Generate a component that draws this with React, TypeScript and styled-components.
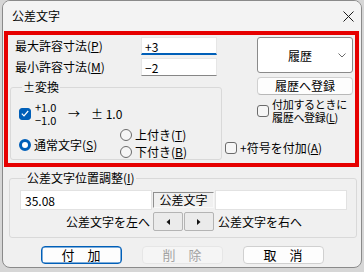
import React from "react";
import styled, { createGlobalStyle } from "styled-components";

const GlobalStyle = createGlobalStyle`
  html, body {
    margin: 0;
    padding: 0;
  }
  body {
    width: 364px;
    height: 272px;
    overflow: hidden;
    background: #d6d6d6;
    font-family: "Noto Sans CJK JP", "Noto Sans", sans-serif;
    font-size: 12px;
    color: #000;
  }
  * {
    box-sizing: border-box;
  }
`;

export default function App() {
  return (
    <>
      <GlobalStyle />
      <Window>
        <TitleBar>
          <Title>公差文字</Title>
          <CloseButton>
            <svg width="11" height="11" viewBox="0 0 11 11">
              <path d="M0.5 0.5 L10.5 10.5 M10.5 0.5 L0.5 10.5" stroke="#1b1b1b" strokeWidth="1" />
            </svg>
          </CloseButton>
        </TitleBar>

        <RedFrame>
          <LeftColumn>
            <FieldRow>
              <FieldLabel>最大許容寸法(<U>P</U>)</FieldLabel>
              <TextBox $focused>+3</TextBox>
            </FieldRow>
            <FieldRow $gap={3}>
              <FieldLabel>最小許容寸法(<U>M</U>)</FieldLabel>
              <TextBox>−2</TextBox>
            </FieldRow>

            <ConvertGroup>
              <Legend>±変換</Legend>
              <ConvertRow>
                <CheckBox $checked>
                  <svg width="8" height="7" viewBox="0 0 8 7">
                    <path d="M0.8 3.6 L3 5.8 L7.2 1" stroke="#fff" strokeWidth="1.2" fill="none" />
                  </svg>
                </CheckBox>
                <Fraction>
                  <span>+1.0</span>
                  <span>−1.0</span>
                </Fraction>
                <Arrow>→</Arrow>
                <span>± 1.0</span>
              </ConvertRow>
              <RadioArea>
                <RadioItem $offset={3}>
                  <Radio $checked />
                  <span>通常文字(<U>S</U>)</span>
                </RadioItem>
                <RadioStack>
                  <RadioItem>
                    <Radio />
                    <span>上付き(<U>T</U>)</span>
                  </RadioItem>
                  <RadioItem>
                    <Radio />
                    <span>下付き(<U>B</U>)</span>
                  </RadioItem>
                </RadioStack>
              </RadioArea>
            </ConvertGroup>
          </LeftColumn>

          <RightColumn>
            <ComboBox>
              <ComboText>履歴</ComboText>
              <svg width="8" height="5" viewBox="0 0 8 5">
                <path d="M0.5 0.5 L4 4 L7.5 0.5" stroke="#6b6b6b" strokeWidth="1" fill="none" />
              </svg>
            </ComboBox>
            <SmallButton>履歴へ登録</SmallButton>
            <CheckRow $indent={39} $top={3}>
              <CheckBox />
              <TwoLine>
                <span>付加するときに</span>
                <span>履歴へ登録(<U>L</U>)</span>
              </TwoLine>
            </CheckRow>
            <CheckRow $indent={7} $top={17}>
              <CheckBox />
              <span>+符号を付加(<U>A</U>)</span>
            </CheckRow>
          </RightColumn>
        </RedFrame>

        <PositionGroup>
          <Legend $left={6}>公差文字位置調整(<U>I</U>)</Legend>
          <PositionGrid>
            <PlainBox>35.08</PlainBox>
            <SunkenLabel>公差文字</SunkenLabel>
            <PlainBox />
            <SideText $align="right">公差文字を左へ</SideText>
            <ArrowPair>
              <ArrowButton>
                <svg width="4" height="6" viewBox="0 0 4 6">
                  <path d="M4 0 L0.5 3 L4 6 Z" fill="#111" />
                </svg>
              </ArrowButton>
              <ArrowButton>
                <svg width="4" height="6" viewBox="0 0 4 6">
                  <path d="M0 0 L3.5 3 L0 6 Z" fill="#111" />
                </svg>
              </ArrowButton>
            </ArrowPair>
            <SideText $align="left">公差文字を右へ</SideText>
          </PositionGrid>
        </PositionGroup>

        <ButtonBar>
          <DialogButton $variant="default">付　加</DialogButton>
          <DialogButton $variant="disabled">削　除</DialogButton>
          <DialogButton>取　消</DialogButton>
        </ButtonBar>
      </Window>
    </>
  );
}

const Window = styled.div`
  display: flex;
  flex-direction: column;
  margin-left: 2px;
  width: 360px;
  height: 268px;
  background: #f0f0f0;
  border: 1px solid #8a8a8a;
  border-radius: 8px;
  overflow: hidden;
`;

const TitleBar = styled.div`
  display: flex;
  align-items: center;
  justify-content: space-between;
  height: 30px;
  padding: 0 6px 0 9px;
  background: #f3f3f3;
`;

const Title = styled.span`
  font-size: 12px;
  line-height: 14px;
`;

const CloseButton = styled.span`
  display: flex;
  width: 11px;
  height: 11px;
  margin-right: 1px;
`;

const U = styled.span`
  text-decoration: underline;
  text-underline-offset: 1px;
`;

const RedFrame = styled.div`
  display: grid;
  grid-template-columns: 210px 1fr;
  height: 136px;
  margin: 0 2px 0 1px;
  border: 4px solid #e60000;
`;

const LeftColumn = styled.div`
  display: flex;
  flex-direction: column;
`;

const FieldRow = styled.div<{ $gap?: number }>`
  display: flex;
  align-items: center;
  height: 18px;
  margin-top: ${(p) => p.$gap ?? 2}px;
`;

const FieldLabel = styled.span`
  width: 133px;
  padding-left: 7px;
  line-height: 14px;
`;

const TextBox = styled.div<{ $focused?: boolean }>`
  width: 76px;
  height: 18px;
  padding: 1px 3px 0;
  line-height: 15px;
  background: #fff;
  border: 1px solid #e6e6e6;
  border-bottom: ${(p) => (p.$focused ? "2px solid #005fb8" : "1px solid #868686")};
`;

const ConvertGroup = styled.fieldset`
  margin: 4px 0 0 2px;
  padding: 0 0 0 8px;
  width: 208px;
  height: 80px;
  border: 1px solid #d9d9d9;
  border-radius: 3px;
`;

const Legend = styled.legend<{ $left?: number }>`
  margin-left: ${(p) => p.$left ?? 3}px;
  padding: 0 1px;
  line-height: 14px;
  font-size: 12px;
`;

const ConvertRow = styled.div`
  display: flex;
  align-items: center;
  margin-top: 7px;
  height: 25px;
  line-height: 12px;
`;

const CheckBox = styled.span<{ $checked?: boolean }>`
  display: inline-flex;
  align-items: center;
  justify-content: center;
  flex: none;
  width: 12px;
  height: 12px;
  border-radius: 3px;
  background: ${(p) => (p.$checked ? "#005fb8" : "#f6f6f6")};
  border: 1px solid ${(p) => (p.$checked ? "#005fb8" : "#6b6b6b")};
`;

const Fraction = styled.span`
  display: flex;
  flex-direction: column;
  gap: 1px;
  margin-left: 4px;
  width: 33px;
  font-size: 11px;
  line-height: 12px;
`;

const Arrow = styled.span`
  width: 23px;
`;

const RadioArea = styled.div`
  display: flex;
`;

const RadioStack = styled.div`
  display: flex;
  flex-direction: column;
`;

const RadioItem = styled.div<{ $offset?: number }>`
  display: flex;
  align-items: center;
  gap: 3px;
  height: 17px;
  width: 101px;
  padding-top: ${(p) => p.$offset ?? 0}px;
  box-sizing: content-box;
  line-height: 14px;
  white-space: nowrap;
  &:first-child {
    align-self: center;
  }
`;

const Radio = styled.span<{ $checked?: boolean }>`
  flex: none;
  width: 12px;
  height: 12px;
  border-radius: 50%;
  background: ${(p) => (p.$checked ? "#fff" : "#f6f6f6")};
  border: ${(p) => (p.$checked ? "3.5px solid #005fb8" : "1px solid #6b6b6b")};
`;

const RightColumn = styled.div`
  display: flex;
  flex-direction: column;
`;

const ComboBox = styled.div`
  display: flex;
  align-items: center;
  margin: 2px 0 0 39px;
  width: 96px;
  height: 36px;
  padding: 0 6px 0 0;
  background: #fff;
  border: 1px solid #8a8a8a;
  border-radius: 3px;
`;

const ComboText = styled.span`
  flex: 1;
  text-align: center;
  padding-left: 4px;
`;

const SmallButton = styled.div`
  margin: 4px 0 0 39px;
  width: 96px;
  height: 18px;
  line-height: 16px;
  text-align: center;
  background: #fdfdfd;
  border: 1px solid #d0d0d0;
  border-bottom-color: #b8b8b8;
  border-radius: 4px;
`;

const CheckRow = styled.div<{ $indent: number; $top: number }>`
  display: flex;
  align-items: center;
  gap: 3px;
  margin: ${(p) => p.$top}px 0 0 ${(p) => p.$indent}px;
  line-height: 14px;
  white-space: nowrap;
`;

const TwoLine = styled.span`
  display: flex;
  flex-direction: column;
  font-size: 11px;
  line-height: 13px;
  letter-spacing: -0.3px;
`;

const PositionGroup = styled.fieldset`
  margin: 4px 0 0 6px;
  padding: 0 0 5px 10px;
  width: 348px;
  height: 67px;
  border: 1px solid #d9d9d9;
  border-radius: 3px;
`;

const PositionGrid = styled.div`
  display: grid;
  grid-template-columns: 132px 61px 132px;
  grid-template-rows: 20px 19px;
  column-gap: 1px;
  row-gap: 2px;
  margin-top: 5px;
`;

const PlainBox = styled.div`
  padding: 2px 4px 0;
  line-height: 15px;
  background: #fff;
  border: 1px solid #e2e2e2;
`;

const SunkenLabel = styled.div`
  margin-top: 2px;
  height: 16px;
  line-height: 14px;
  text-align: center;
  border: 1px solid #f8f8f8;
  border-top-color: #8f8f8f;
  border-left-color: #8f8f8f;
`;

const SideText = styled.div<{ $align: "left" | "right" }>`
  display: flex;
  align-items: center;
  justify-content: ${(p) => (p.$align === "right" ? "flex-end" : "flex-start")};
  padding: ${(p) => (p.$align === "right" ? "0 2px 0 0" : "0 0 0 3px")};
`;

const ArrowPair = styled.div`
  display: flex;
  gap: 1px;
`;

const ArrowButton = styled.div`
  display: flex;
  align-items: center;
  justify-content: center;
  width: 30px;
  background: #ebebeb;
  border: 1px solid #b4b4b4;
  border-radius: 2px;
`;

const ButtonBar = styled.div`
  display: flex;
  justify-content: center;
  gap: 20px;
  margin-top: 8px;
`;

const DialogButton = styled.div<{ $variant?: "default" | "disabled" }>`
  width: 81px;
  height: 18px;
  line-height: 16px;
  text-align: center;
  font-size: 13px;
  border-radius: 4px;
  background: ${(p) => (p.$variant === "disabled" ? "#f5f5f5" : "#fdfdfd")};
  color: ${(p) => (p.$variant === "disabled" ? "#a3a3a3" : "#000")};
  border: 1px solid
    ${(p) =>
      p.$variant === "default" ? "#005fb8" : p.$variant === "disabled" ? "#e6e6e6" : "#d0d0d0"};
  box-shadow: ${(p) => (p.$variant === "default" ? "inset 0 0 0 0.5px #005fb8" : "none")};
`;
